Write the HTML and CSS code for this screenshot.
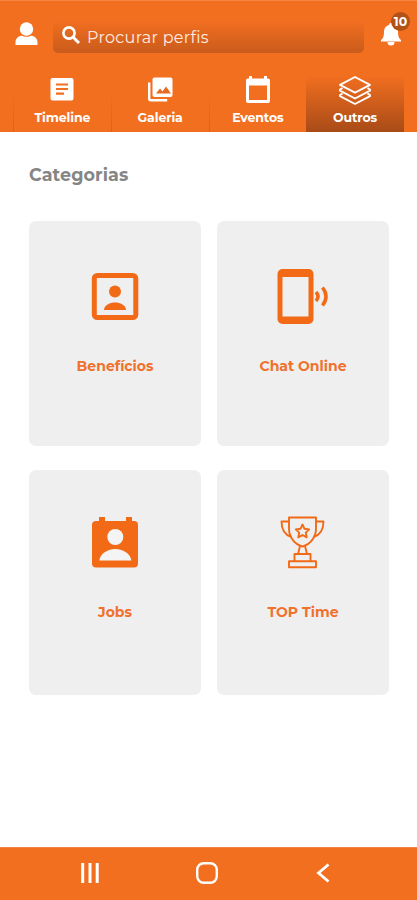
FILE: index.html
```html
<!DOCTYPE html>
<html lang="pt-BR">

<head>
    <meta charset="UTF-8">
    <meta name="viewport" content="width=device-width, initial-scale=1.0">
    <title>Categorias</title>
    <link rel="stylesheet" href="styles.css">
</head>

<body>
    <header class="header">
        <div class="top-bar">
            <svg class="profile-icon" viewBox="0 0 22 23" fill="#fff">
                <circle cx="11" cy="7" r="6.7" />
                <path d="M0 23v-2.5c0-4 2.5-6 6-7 2.500 1.700 7.500 1.700 10 0 3.500 1 6 3 6 7V23z" />
            </svg>
            <div class="search">
                <svg class="search-icon" viewBox="0 0 18 18" fill="none" stroke="#fff" stroke-width="2.6">
                    <circle cx="7" cy="7" r="5.600" />
                    <path d="M11 11l6 6" stroke-width="3" />
                </svg>
                <span class="search-text">Procurar perfis</span>
            </div>
            <div class="notifications">
                <svg class="bell-icon" viewBox="0 0 20 23" fill="#fff">
                    <path d="M10 0c1 0 1.700.7 1.700 1.700C15 2.500 17 5 17 8.500c0 5 1 7 3 8.500v1.500H0V17c2-1.500 3-3.500 3-8.500C3 5 5 2.500 8.300 1.700 8.300.7 9 0 10 0z" />
                    <path d="M6.500 19h7a3.500 3.500 0 0 1-7 0z" />
                </svg>
                <span class="badge">10</span>
            </div>
        </div>
        <nav class="tabs">
            <div class="tab">
                <svg class="tab-icon" width="34" height="30" viewBox="0 0 34 30">
                    <rect x="5.500" y="3" width="23" height="22.500" rx="2" fill="#fff" />
                    <path d="M11 9.500h12M11 14h12M11 18.700h8" stroke="#f36f20" stroke-width="2.200" />
                </svg>
                <span class="tab-label">Timeline</span>
            </div>
            <div class="tab">
                <svg class="tab-icon" width="34" height="30" viewBox="0 0 34 30">
                    <path d="M6.200 7.500v16.300a1.500 1.500 0 0 0 1.500 1.500h16.500" fill="none" stroke="#fff" stroke-width="2.400" />
                    <rect x="9.500" y="2.500" width="20" height="19.500" rx="2" fill="#fff" />
                    <path d="M13 18.500l4-5 2.500 3 3.500-5 5 7z" fill="#e86a20" />
                </svg>
                <span class="tab-label">Galeria</span>
            </div>
            <div class="tab">
                <svg class="tab-icon" width="34" height="30" viewBox="0 0 34 30">
                    <path fill="#fff" fill-rule="evenodd" d="M8 1h3v2.500h12V1h3v2.500h1a2 2 0 0 1 2 2V26a2 2 0 0 1-2 2H7a2 2 0 0 1-2-2V5.500a2 2 0 0 1 2-2h1zM8 10.500v14.500h18V10.500z" />
                </svg>
                <span class="tab-label">Eventos</span>
            </div>
            <div class="tab active">
                <svg class="tab-icon" width="34" height="30" viewBox="0 0 34 30" fill="none" stroke="#fff" stroke-width="1.900" stroke-linejoin="round">
                    <path d="M17 2l15 7.800L17 17.600 2 9.800z" />
                    <path d="M4.500 13l-2.500 1.600v1L17 23.500l15-7.900v-1L29.500 13" />
                    <path d="M4.500 18.500l-2.500 1.600v1L17 29l15-7.900v-1l-2.500-1.600" />
                </svg>
                <span class="tab-label">Outros</span>
            </div>
        </nav>
    </header>

    <main class="content">
        <h1 class="title">Categorias</h1>
        <div class="cards">
            <div class="card">
                <svg class="card-icon" width="56" height="58" viewBox="0 0 56 58" fill="#f26a16">
                    <rect x="7.300" y="7.500" width="41.500" height="42" rx="3" fill="none" stroke="#f26a16" stroke-width="5" />
                    <circle cx="28" cy="23.500" r="6" />
                    <path d="M17 42c0-5 6-7.500 11-7.500s11 2.500 11 7.500z" />
                </svg>
                <span class="card-label">Benefícios</span>
            </div>
            <div class="card">
                <svg class="card-icon" width="56" height="58" viewBox="0 0 56 58" fill="#f26a16">
                    <path fill-rule="evenodd" d="M7.500 1h26a5 5 0 0 1 5 5v45a5 5 0 0 1-5 5h-26a5 5 0 0 1-5-5V6a5 5 0 0 1 5-5zM7.500 9v39.500h26V9z" />
                    <path d="M41 24q4 4.500 0 9M47.500 19.500q7 9 0 18" fill="none" stroke="#f26a16" stroke-width="3.500" />
                </svg>
                <span class="card-label">Chat Online</span>
            </div>
            <div class="card">
                <svg class="card-icon" width="56" height="58" viewBox="0 0 56 58" fill="#f26a16">
                    <path d="M12 2h6v4h21V2h6v4h2a4 4 0 0 1 4 4v38.500a4 4 0 0 1-4 4H9a4 4 0 0 1-4-4V10a4 4 0 0 1 4-4h3z" />
                    <g fill="#f4f4f4">
                        <circle cx="28.300" cy="22" r="8" />
                        <path d="M12.300 45.500c1-7.500 9-11.500 16-11.500s15 4 16 11.500z" />
                    </g>
                </svg>
                <span class="card-label">Jobs</span>
            </div>
            <div class="card">
                <svg class="card-icon" width="56" height="58" viewBox="0 0 56 58" fill="none" stroke="#f26a16" stroke-width="1.900" stroke-linejoin="round">
                    <path d="M14 2.500h27v11c0 9-6 16-13.500 18C20 29.500 14 22.500 14 13.500z" />
                    <path d="M14 6.500H6.500c0 8 3.500 13.500 10 15.500M41 6.500h7.500c0 8-3.500 13.500-10 15.500" />
                    <path d="M25 31l-2 8M30 31l2 8M19.500 46v-7h16v7M14 46.300h27v6H14z" />
                    <path d="M27.500 9.500l2 4.300 4.700.6-3.400 3.200.9 4.700-4.200-2.300-4.200 2.300.9-4.700-3.400-3.200 4.700-.6z" />
                </svg>
                <span class="card-label">TOP Time</span>
            </div>
        </div>
    </main>

    <footer class="nav-bar">
        <svg width="24" height="24" viewBox="0 0 24 24" stroke="#fff" stroke-width="3">
            <path d="M4.700 2v20M12 2v20M19.200 2v20" />
        </svg>
        <svg width="24" height="24" viewBox="0 0 24 24" fill="none" stroke="#fff" stroke-width="2.400">
            <rect x="2.200" y="2.200" width="19.600" height="19.600" rx="6.500" />
        </svg>
        <svg width="24" height="24" viewBox="0 0 24 24" fill="none" stroke="#fff" stroke-width="2.800">
            <path d="M17.500 3.500L7.500 12l10 8.500" />
        </svg>
    </footer>
</body>

</html>
```
FILE: styles.css
```css
* {
    box-sizing: border-box;
}

body {
    margin: 0;
    height: 100vh;
    display: flex;
    flex-direction: column;
    background: #fff;
    font-family: 'Montserrat', 'Inter', sans-serif;
    overflow: hidden;
}

svg {
    display: block;
    flex-shrink: 0;
}

/* Header */
.header {
    height: 132px;
    background: #f36f20;
    border-top: 1px solid #f58545;
    display: flex;
    flex-direction: column;
    justify-content: space-between;
}

.top-bar {
    display: flex;
    align-items: flex-start;
    padding: 19px 0 0 15px;
}

.profile-icon {
    width: 23px;
    height: 23px;
    margin-top: 2px;
}

.search {
    width: 311px;
    height: 33px;
    margin-left: 15px;
    padding: 0 9px;
    display: flex;
    align-items: center;
    gap: 7px;
    border-radius: 5px;
    background: linear-gradient(#f36f20, #c95b1b);
}

.search-icon {
    width: 18px;
    height: 18px;
    margin-bottom: 4px;
}

.search-text {
    padding-top: 1px;
    color: #ffece1;
    font-size: 16px;
    letter-spacing: 0.3px;
    line-height: 33px;
}

.notifications {
    position: relative;
    margin: 3px 0 0 17px;
}

.bell-icon {
    width: 20px;
    height: 23px;
}

.badge {
    position: absolute;
    top: -11px;
    left: 10px;
    width: 19px;
    height: 19px;
    border-radius: 50%;
    background: #b35217;
    color: #fff;
    font-size: 12.5px;
    font-weight: 700;
    line-height: 19px;
    text-align: center;
}

.tabs {
    height: 57px;
    padding: 0 13px;
    display: grid;
    grid-template-columns: repeat(4, 1fr);
}

.tab {
    display: flex;
    flex-direction: column;
    align-items: center;
    color: #fff;
    border-left: 1px solid;
    border-image: linear-gradient(#f36f20 30%, #d9611c) 1;
}

.tab.active {
    background: linear-gradient(#f36f20, #a84b17);
    border-left: 0;
}

.tab-label {
    margin-top: 5px;
    font-size: 12.5px;
    font-weight: 700;
    line-height: 16px;
    letter-spacing: -0.1px;
}

/* Categories */
.content {
    flex: 1;
    padding: 31px 28px 0 29px;
}

.title {
    margin: 0 0 34px;
    color: #858585;
    font-size: 17.5px;
    font-weight: 700;
    line-height: 24px;
    letter-spacing: 0.1px;
}

.cards {
    display: grid;
    grid-template-columns: 1fr 1fr;
    grid-auto-rows: 225px;
    gap: 24px 16px;
}

.card {
    display: flex;
    flex-direction: column;
    align-items: center;
    padding-top: 47px;
    border-radius: 7px;
    background: #efefef;
}

/* second row sits a little higher inside its cards */
.card:nth-child(n + 3) {
    padding-top: 45px;
}

.card-label {
    margin-top: 30px;
    color: #f0712c;
    font-size: 14px;
    font-weight: 700;
    line-height: 20px;
}

.card:nth-child(n + 3) .card-label {
    margin-top: 29px;
}

/* System navigation */
.nav-bar {
    height: 53px;
    padding: 0 82px 2px 78px;
    display: flex;
    align-items: center;
    justify-content: space-between;
    background: #f36f20;
    border-top: 1px solid #f58545;
}
```
